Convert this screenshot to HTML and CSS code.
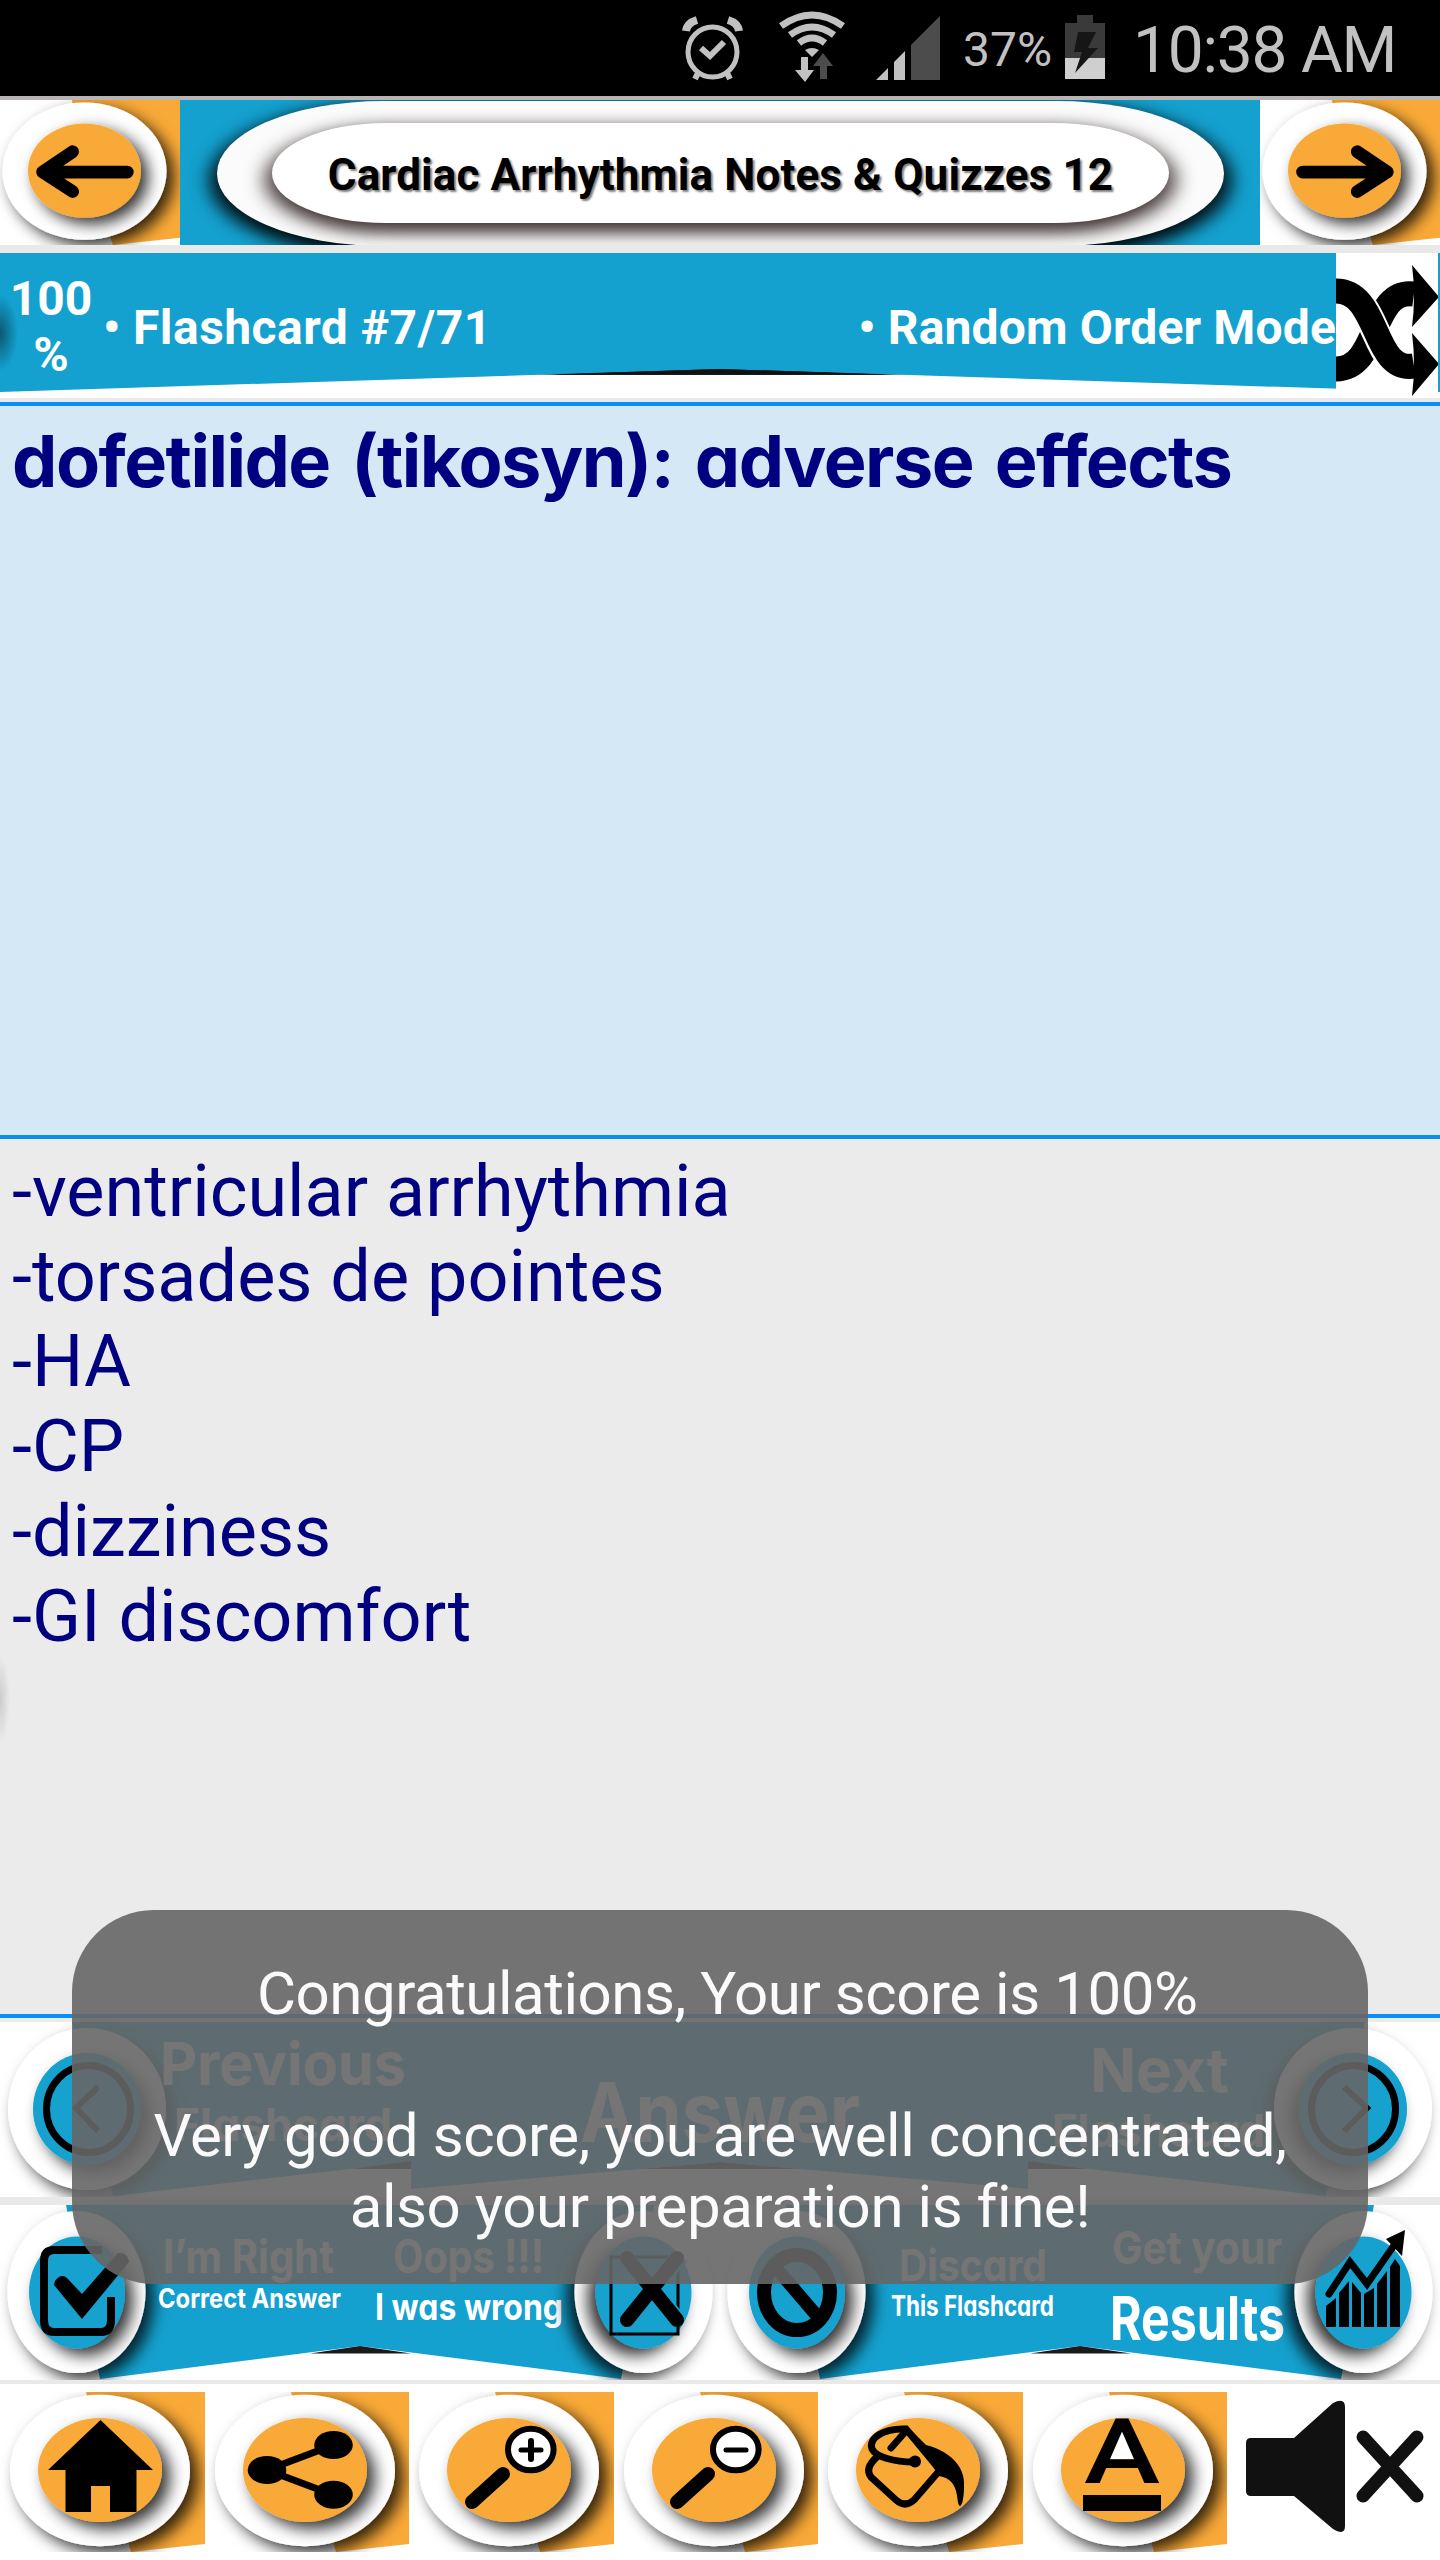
FILE: index.html
```html
<!DOCTYPE html>
<html lang="en">
<head>
  <meta charset="UTF-8" />
  <meta name="viewport" content="width=device-width, initial-scale=1.0" />
  <title>Cardiac Arrhythmia Notes &amp; Quizzes 12</title>
  <link rel="stylesheet" href="styles.css">
</head>
<body>

  <!-- Shared shapes -->
  <svg class="defs" width="0" height="0">
    <defs>
      <filter id="shadow" x="-30%" y="-30%" width="160%" height="160%">
        <feDropShadow dx="8" dy="7" stdDeviation="8" flood-color="#000" flood-opacity="0.8" />
      </filter>
      <filter id="shadow-left" x="-30%" y="-30%" width="160%" height="160%">
        <feDropShadow dx="-8" dy="7" stdDeviation="8" flood-color="#000" flood-opacity="0.8" />
      </filter>
      <symbol id="tile" viewBox="0 0 204 160" overflow="visible">
        <path d="M86 0H214V151L131 160Z" fill="#f9a937" />
        <ellipse cx="100" cy="78.5" rx="90" ry="75.7" fill="#fff" filter="url(#shadow)" />
        <ellipse cx="100" cy="78" rx="62" ry="52" fill="#f9a937" filter="url(#shadow)" />
      </symbol>
      <symbol id="lens" viewBox="0 0 204 160">
        <path d="M94 82L63 110" stroke="#000" stroke-width="14" stroke-linecap="round" />
        <ellipse cx="121.8" cy="57.5" rx="22.8" ry="20.8" fill="#fff" stroke="#000" stroke-width="6" />
        <path d="M112 58H132" stroke="#000" stroke-width="5" stroke-linecap="round" />
      </symbol>
    </defs>
  </svg>

  <div class="screen">

    <!-- Status bar -->
    <div class="status-bar">
      <svg class="status-icons" width="272" height="96" viewBox="676 0 272 96">
        <g fill="none" stroke="#c1c1c1">
          <ellipse cx="712.5" cy="52" rx="24.5" ry="25" stroke-width="5" />
          <path d="M701 48L710 56L724 42" stroke-width="6" />
          <path d="M686 31Q687 23 697 20M739 31Q738 23 728 20" stroke-width="8" />
          <path d="M698 73L695 79M727 73L730 79" stroke-width="6" />
          <path d="M781 26Q812 4 843 26" stroke-width="7" />
          <path d="M790 35Q812 19 834 35" stroke-width="7" />
          <path d="M799 43Q812 33 825 43" stroke-width="7" />
        </g>
        <path d="M805 50Q812 46 819 50L812 57Z M801 57H808V70H814L805 82L795 70H801Z M876 80L888 68V80Z M894 80V62L905 51V80Z" fill="#c1c1c1" />
        <path d="M823 53L833 66H827V79H820V66H813Z M911 80V45L940 16V80Z" fill="#4c4c4c" />
      </svg>
      <span class="battery-level">37%</span>
      <svg class="battery" width="40" height="96" viewBox="1065 0 40 96">
        <path d="M1065 23H1077V15H1093V23H1105V79H1065Z" fill="#3a3a3a" />
        <path d="M1065 58H1105V79H1065Z" fill="#cfcfcf" />
        <path d="M1078 32H1096L1088 48H1098L1075 73L1082 52H1074Z" fill="#161616" />
      </svg>
      <span class="clock">10:38 AM</span>
    </div>

    <!-- Title with back and forward buttons -->
    <header class="title-bar">
      <svg class="nav-btn" viewBox="7.3 0 197.5 160" preserveAspectRatio="none">
        <use href="#tile" width="204" height="160" />
        <path d="M147 79.500H56M87 57L54 79.500L87 101" fill="none" stroke="#000" stroke-width="14" stroke-linecap="round" stroke-linejoin="round" />
        <path d="M50 79.500L74 65V94Z" />
      </svg>
      <div class="title-frame">
        <div class="title-ring">
          <h1 class="title">Cardiac Arrhythmia Notes &amp; Quizzes 12</h1>
        </div>
      </div>
      <svg class="nav-btn" viewBox="7.3 0 197.5 160" preserveAspectRatio="none">
        <use href="#tile" width="204" height="160" />
        <path d="M54 79.500H145M114 57L147 79.500L114 101" fill="none" stroke="#000" stroke-width="14" stroke-linecap="round" stroke-linejoin="round" />
        <path d="M151 79.500L127 65V94Z" />
      </svg>
    </header>

    <!-- Card counter -->
    <div class="info-bar">
      <svg class="info-bg" width="1440" height="145" viewBox="0 0 1440 145">
        <defs>
          <radialGradient id="edge">
            <stop offset="0" stop-color="#0a5870" />
            <stop offset="1" stop-color="#14a1cf" />
          </radialGradient>
        </defs>
        <path d="M533 122L720 115L908 122Z" fill="#1a1a1a" />
        <path d="M0 0H1440V139L720 116L0 139Z" fill="#14a1cf" />
        <path d="M560 121L720 116L880 121Z" fill="#111" />
        <ellipse cx="0" cy="80" rx="18" ry="38" fill="url(#edge)" />
      </svg>
      <span class="score">100<br>%</span>
      <span class="counter">• Flashcard #7/71</span>
      <span class="mode">• Random Order Mode</span>
      <svg class="shuffle" width="102" height="145" viewBox="1336 253 102 145">
        <path d="M1336 369C1380 369 1370 288 1414 294" fill="none" stroke="#000" stroke-width="25" />
        <path d="M1336 291C1380 291 1372 373 1414 368" fill="none" stroke="#fff" stroke-width="29" />
        <path d="M1336 291C1380 291 1372 373 1414 366" fill="none" stroke="#000" stroke-width="25" />
        <path d="M1412 265L1439 297L1412 327Q1416 296 1412 265Z M1412 333L1439 364L1412 396Q1416 364 1412 333Z" />
      </svg>
    </div>

    <!-- Question and answer -->
    <section class="question">dofetilide (tikosyn): adverse effects</section>
    <section class="answer">
      -ventricular arrhythmia<br>
      -torsades de pointes<br>
      -HA<br>
      -CP<br>
      -dizziness<br>
      -GI discomfort
    </section>

    <!-- Previous / Answer / Next -->
    <div class="row row-nav">
      <svg class="side-btn" viewBox="0 0 411 175">
        <path d="M72 0H411V140L113 174Z" fill="#14a1cf" />
        <path d="M350 147L411 139V147Z" fill="#1a1a1a" />
        <ellipse cx="87" cy="87" rx="79" ry="81" fill="#fff" filter="url(#shadow)" />
        <ellipse cx="87" cy="87" rx="54" ry="56" fill="#14a1cf" filter="url(#shadow)" />
        <ellipse cx="88.500" cy="87" rx="42" ry="43.500" fill="none" stroke="#000" stroke-width="7" />
        <path d="M98 65L76 86L98 109" fill="none" stroke="#000" stroke-width="6" />
        <text class="label" x="160" y="63" font-size="59" textLength="246" lengthAdjust="spacingAndGlyphs">Previous</text>
        <text class="label" x="174" y="119" font-size="45" textLength="218" lengthAdjust="spacingAndGlyphs">Flashcard</text>
      </svg>
      <svg class="mid-btn" viewBox="0 0 617 175">
        <path d="M0 0H617V167L309 140L0 167Z" fill="#14a1cf" />
        <path d="M229 147L309 140L389 147Z" fill="#1a1a1a" />
        <text class="label" x="169" y="120" font-size="83" textLength="280" lengthAdjust="spacingAndGlyphs">Answer</text>
      </svg>
      <svg class="side-btn side-btn-next" viewBox="0 0 412 175">
        <path d="M0 0H337L298 174L0 140Z" fill="#14a1cf" />
        <path d="M0 139L60 147H0Z" fill="#1a1a1a" />
        <ellipse cx="325" cy="87" rx="79" ry="81" fill="#fff" filter="url(#shadow-left)" />
        <ellipse cx="325" cy="87" rx="54" ry="56" fill="#14a1cf" filter="url(#shadow-left)" />
        <ellipse cx="325.500" cy="87" rx="42" ry="43.500" fill="none" stroke="#000" stroke-width="7" />
        <path d="M316 65L339 86L316 109" fill="none" stroke="#000" stroke-width="6" />
        <text class="label" x="62" y="70" font-size="61" textLength="139" lengthAdjust="spacingAndGlyphs">Next</text>
        <text class="label" x="24" y="125" font-size="45" textLength="213" lengthAdjust="spacingAndGlyphs">Flashcard</text>
      </svg>
    </div>

    <!-- Right / wrong / discard / results -->
    <div class="row row-actions">
      <svg class="half-btn" viewBox="0 0 720 175">
        <path d="M66 0H654L621 174L360 141L100 174Z" fill="#14a1cf" />
        <path d="M310 148.500L360 141L411 148.500Z" fill="#1a1a1a" />
        <ellipse cx="76.500" cy="87" rx="69" ry="81" fill="#fff" filter="url(#shadow)" />
        <ellipse cx="77" cy="87.500" rx="48" ry="56" fill="#14a1cf" filter="url(#shadow)" />
        <path d="M102 45H54Q44 45 44 56V115Q44 127 54 127H101Q111 127 111 115V92" fill="none" stroke="#000" stroke-width="8" />
        <path d="M55 76Q61 68 67 73L82 89L118 48Q128 47 129 57L82 114L54 80Z" />
        <text class="label" x="163" y="68" font-size="46" textLength="171" lengthAdjust="spacingAndGlyphs">I’m Right</text>
        <text class="label" x="158" y="103" font-size="27" textLength="183" lengthAdjust="spacingAndGlyphs">Correct Answer</text>
        <text class="label" x="393" y="68" font-size="46" textLength="151" lengthAdjust="spacingAndGlyphs">Oops !!!</text>
        <text class="label" x="375" y="115" font-size="37" textLength="188" lengthAdjust="spacingAndGlyphs">I was wrong</text>
        <ellipse cx="643.500" cy="87" rx="69" ry="81" fill="#fff" filter="url(#shadow-left)" />
        <ellipse cx="643.500" cy="87.500" rx="48" ry="56" fill="#14a1cf" filter="url(#shadow-left)" />
        <rect x="611" y="52" width="67" height="77" fill="none" stroke="#000" stroke-width="3" />
        <path d="M625 53L678 116M680 51L625 116" fill="none" stroke="#14a1cf" stroke-width="18" />
        <path d="M627 53L677 115M677 53L627 115" fill="none" stroke="#000" stroke-width="14" stroke-linecap="round" />
      </svg>
      <svg class="half-btn" viewBox="0 0 720 175">
        <path d="M66 0H654L621 174L360 141L100 174Z" fill="#14a1cf" />
        <path d="M310 148.500L360 141L411 148.500Z" fill="#1a1a1a" />
        <ellipse cx="76.500" cy="87" rx="69" ry="81" fill="#fff" filter="url(#shadow)" />
        <ellipse cx="77" cy="87.500" rx="48" ry="56" fill="#14a1cf" filter="url(#shadow)" />
        <ellipse cx="77" cy="87.500" rx="33" ry="37.500" fill="none" stroke="#000" stroke-width="14" />
        <path d="M56 63L98 112" stroke="#000" stroke-width="13" />
        <text class="label" x="179" y="76" font-size="44" textLength="148" lengthAdjust="spacingAndGlyphs">Discard</text>
        <text class="label" x="171" y="111" font-size="28" textLength="163" lengthAdjust="spacingAndGlyphs">This Flashcard</text>
        <text class="label" x="392" y="59" font-size="45" textLength="170" lengthAdjust="spacingAndGlyphs">Get your</text>
        <text class="label" x="390" y="135" font-size="61" textLength="175" lengthAdjust="spacingAndGlyphs">Results</text>
        <ellipse cx="643.500" cy="87" rx="69" ry="81" fill="#fff" filter="url(#shadow-left)" />
        <ellipse cx="643.500" cy="87.500" rx="48" ry="56" fill="#14a1cf" filter="url(#shadow-left)" />
        <path d="M672 60L675 54L682 62V68Z" fill="none" stroke="#14a1cf" stroke-width="5" />
        <path d="M606 101L616 93V122H606Z M619 88L629 76V122H619Z M632 77L641 88V122H632Z M644 89L654 83V122H644Z M657 79L667 66V122H657Z M670 62L675 54L680 61V122H670Z" />
        <path d="M609 89L630 57L647 79L675 39" fill="none" stroke="#000" stroke-width="7" stroke-linecap="round" />
        <path d="M685 25L666 34L682 51Z" />
      </svg>
    </div>

    <!-- Toolbar -->
    <div class="toolbar">
      <svg class="tool" viewBox="0 0 204.500 160">
        <use href="#tile" width="204" height="160" />
        <path d="M100.500 28L153 78H136.500V120H110V94H91V120H65.500V78H48Z" />
      </svg>
      <svg class="tool" viewBox="0 0 204.500 160">
        <use href="#tile" width="204" height="160" />
        <path d="M128.500 53L62 78L128.500 103" fill="none" stroke="#000" stroke-width="7" />
        <ellipse cx="62" cy="78" rx="19.300" ry="14" />
        <ellipse cx="128.500" cy="53" rx="19.300" ry="14" />
        <ellipse cx="128.500" cy="102.700" rx="19.300" ry="14" />
      </svg>
      <svg class="tool" viewBox="0 0 204.500 160">
        <use href="#tile" width="204" height="160" />
        <use href="#lens" width="204" height="160" />
        <path d="M122 49V67" stroke="#000" stroke-width="6" stroke-linecap="round" />
      </svg>
      <svg class="tool" viewBox="0 0 204.500 160">
        <use href="#tile" width="204" height="160" />
        <use href="#lens" width="204" height="160" />
      </svg>
      <svg class="tool" viewBox="0 0 204.500 160">
        <use href="#tile" width="204" height="160" />
        <g fill="none" stroke="#000" stroke-width="7" stroke-linecap="round">
          <path d="M96 70C76 70 58 65 54 57C50 46 66 36 88 37L122 78L96 108Q87 116 78 108L53 85Q46 76 60 64" />
          <path d="M88 39L73 56" />
        </g>
        <circle cx="97" cy="69.500" r="6" />
        <path d="M90 35L108 53C128 58 148 72 146 95C146 106 144 114 142 114C137 112 144 88 121 84Z" />
      </svg>
      <svg class="tool" viewBox="0 0 204.500 160">
        <use href="#tile" width="204" height="160" />
        <path d="M98 35L86 67H112Z" fill="#fff" />
        <text class="letter" x="61" y="91" textLength="76" lengthAdjust="spacingAndGlyphs">A</text>
        <rect x="60" y="103" width="78" height="16" />
      </svg>
      <svg class="tool-mute" viewBox="0 0 213 160">
        <path d="M19 51Q19 46 24 46H67L106 11Q118 5 118 15V134Q118 144 106 137L67 104H24Q19 104 19 99Z" fill="#111" />
        <path d="M136 45L190 104M190 45L136 104" stroke="#111" stroke-width="13" stroke-linecap="round" />
      </svg>
    </div>

    <!-- Toast -->
    <div class="toast">
      <p>&nbsp;Congratulations, Your score is 100%</p>
      <p>&nbsp;</p>
      <p>Very good score, you are well concentrated,</p>
      <p>also your preparation is fine!</p>
    </div>
  </div>

</body>
</html>
```
FILE: styles.css
```css
body {
  margin: 0;
  background-color: #e9e9e9;
  font-family: Roboto, sans-serif;
}

svg {
  display: block;
  flex-shrink: 0;
}

p {
  margin: 0;
}

.defs {
  position: absolute;
}

.screen {
  position: relative;
  width: 1440px;
  height: 2560px;
  overflow: hidden;
  display: flex;
  flex-direction: column;
}

/* Status bar */
.status-bar {
  height: 96px;
  box-sizing: border-box;
  padding-left: 676px;
  display: flex;
  background-color: #000;
  color: #c1c1c1;
  white-space: nowrap;
}

.battery-level {
  width: 102px;
  padding-left: 15px;
  font-size: 48px;
  line-height: 99px;
}

.clock {
  padding-left: 28px;
  font-size: 64px;
  line-height: 102px;
  letter-spacing: -1.2px;
}

/* Title */
.title-bar {
  height: 145px;
  display: flex;
  border-top: 4px solid #b8b4b4;
  background-color: #fff;
}

.nav-btn {
  width: 180px;
  height: 145px;
}

.title-frame {
  width: 1080px;
  height: 145px;
  box-sizing: border-box;
  padding: 1px 36px 0 37px;
  background-color: #14a1cf;
  overflow: hidden;
}

.title-ring {
  height: 145px;
  box-sizing: border-box;
  padding: 22px 55px 0;
  border-radius: 168px / 73px;
  background-color: #fbfbfb;
  box-shadow: -9px 7px 18px rgba(0, 0, 0, 0.8), 9px 7px 18px rgba(0, 0, 0, 0.8);
}

.title {
  height: 100px;
  margin: 0;
  border-radius: 114px / 50px;
  background-color: #fff;
  box-shadow: -9px 7px 18px rgba(40, 25, 25, 0.7), 9px 7px 18px rgba(40, 25, 25, 0.7);
  color: #000;
  font-size: 44px;
  line-height: 104px;
  letter-spacing: 0.12px;
  text-align: center;
  text-shadow: 2px 2px 2px rgba(0, 0, 0, 0.5);
  white-space: nowrap;
}

/* Info bar */
.info-bar {
  position: relative;
  height: 145px;
  margin-top: 8px;
  display: flex;
  background-color: #fff;
  color: #fff;
  font-size: 48px;
  font-weight: bold;
  white-space: nowrap;
}

.info-bg {
  position: absolute;
  top: 0;
  left: 0;
}

.score,
.counter,
.mode,
.shuffle {
  position: relative;
}

.score {
  width: 102px;
  padding-top: 18px;
  line-height: 56px;
  text-align: center;
}

.counter,
.mode {
  line-height: 150px;
}

.counter {
  padding-left: 1px;
  letter-spacing: 0.45px;
}

.mode {
  margin-left: auto;
  letter-spacing: 0.15px;
}

.shuffle {
  margin-right: 2px;
  background-color: #fff;
}

/* Card */
.question {
  flex: 0 0 733px;
  box-sizing: border-box;
  margin-top: 4px;
  padding: 12px 12px;
  border-top: 4px solid #0a8ff8;
  background-color: #d5e8f6;
  color: #000080;
  font-family: Inter, sans-serif;
  font-feature-settings: "cv11";
  font-size: 72px;
  font-weight: bold;
  line-height: 86px;
  letter-spacing: -1.5px;
  word-spacing: 6px;
  white-space: nowrap;
}

.answer {
  flex: 0 0 879px;
  box-sizing: border-box;
  padding: 10px 12px;
  border-top: 4px solid #0a8fee;
  background: radial-gradient(ellipse 10px 44px at 0 560px, #cbcbcb, rgba(235, 235, 235, 0)) #ebebeb;
  color: #000080;
  font-size: 72px;
  line-height: 85px;
}

/* Button rows */
.row {
  display: flex;
  flex: 0 0 175px;
  background-color: #fff;
}

.row-nav {
  border-top: 4px solid #0a8ff8;
  box-shadow: inset 0 4px 0 #ebebeb;
  padding-top: 4px;
}

.row-actions {
  margin-top: 8px;
}

.side-btn {
  width: 411px;
  height: 175px;
}

.side-btn-next {
  width: 412px;
}

.mid-btn {
  width: 617px;
  height: 175px;
}

.half-btn {
  width: 720px;
  height: 175px;
}

.label {
  fill: #fff;
  font-family: Inter, sans-serif;
  font-feature-settings: "cv11";
  font-weight: bold;
}

/* Toolbar */
.toolbar {
  display: flex;
  flex: 0 0 160px;
  margin-top: 4px;
  padding: 8px 0;
  background-color: #fff;
}

.tool {
  width: 204.5px;
  height: 160px;
}

.tool-mute {
  width: 213px;
  height: 160px;
}

.letter {
  font-size: 91px;
  font-weight: 500;
}

/* Toast */
.toast {
  position: absolute;
  top: 1910px;
  left: 72px;
  width: 1296px;
  height: 374px;
  box-sizing: border-box;
  padding-top: 48px;
  border-radius: 82px;
  background-color: rgba(102, 102, 102, 0.9);
  color: #fafafa;
  font-size: 60px;
  line-height: 71px;
  letter-spacing: -0.45px;
  text-align: center;
  white-space: nowrap;
}
```
